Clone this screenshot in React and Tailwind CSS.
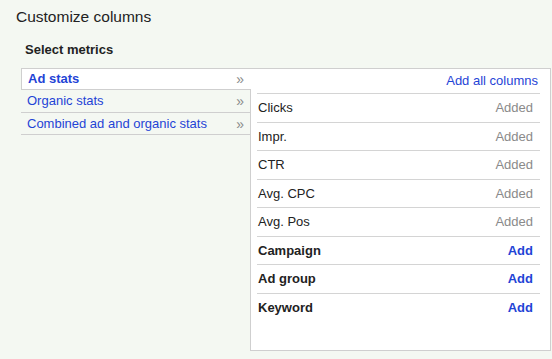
const CATEGORIES = ['Ad stats', 'Organic stats', 'Combined ad and organic stats']

const METRICS = [
  { name: 'Clicks', added: true },
  { name: 'Impr.', added: true },
  { name: 'CTR', added: true },
  { name: 'Avg. CPC', added: true },
  { name: 'Avg. Pos', added: true },
  { name: 'Campaign', added: false },
  { name: 'Ad group', added: false },
  { name: 'Keyword', added: false },
]

export default function App() {
  return (
    <div className="w-[552px] h-[359px] bg-[#f4f8f2] font-['Liberation_Sans',Arial,sans-serif] text-[13px] text-[#222] overflow-hidden">
      <div className="pl-[16px] pt-[7px] text-[15.5px] leading-[20px] text-[#222]">Customize columns</div>
      <div className="pl-[25px] pt-[15px] font-bold leading-[16px] text-[#222]">Select metrics</div>

      <div className="flex pl-[21px] pt-[10px]">
        <div className="w-[229px] shrink-0">
          {CATEGORIES.map((c, i) => (
            <div
              key={c}
              className={
                i === 0
                  ? 'relative z-10 -mr-px h-[22px] flex items-center justify-between bg-white border border-r-0 border-[#cfcfcf] pl-[6px] pr-[7px] font-bold text-[#1f44d6]'
                  : `flex items-center justify-between border-b border-[#cfcfcf] pl-[6px] pr-[6px] text-[#1f44d6] ${i === 1 ? 'h-[23px]' : 'h-[22px]'}`
              }
            >
              <span>{c}</span>
              <span className="text-[14px] leading-none text-[#8a8a8a] font-normal">»</span>
            </div>
          ))}
        </div>

        <div className="w-[301px] h-[283px] bg-white border border-[#cfcfcf]">
          <div className="h-[24px] flex items-center justify-end pr-[12px] text-[#1f44d6]">Add all columns</div>
          <div className="pl-[6px] pr-[10px]">
            {METRICS.map((m) => (
              <div
                key={m.name}
                className="h-[28.5px] flex items-center justify-between border-t border-[#d4d4d4] pl-px pr-[7px]"
              >
                <span className={m.added ? 'text-[#222]' : 'font-bold text-[#222]'}>{m.name}</span>
                {m.added
                  ? <span className="text-[#8a8a8a]">Added</span>
                  : <span className="font-bold text-[#1f44d6]">Add</span>}
              </div>
            ))}
          </div>
        </div>
      </div>
    </div>
  )
}
